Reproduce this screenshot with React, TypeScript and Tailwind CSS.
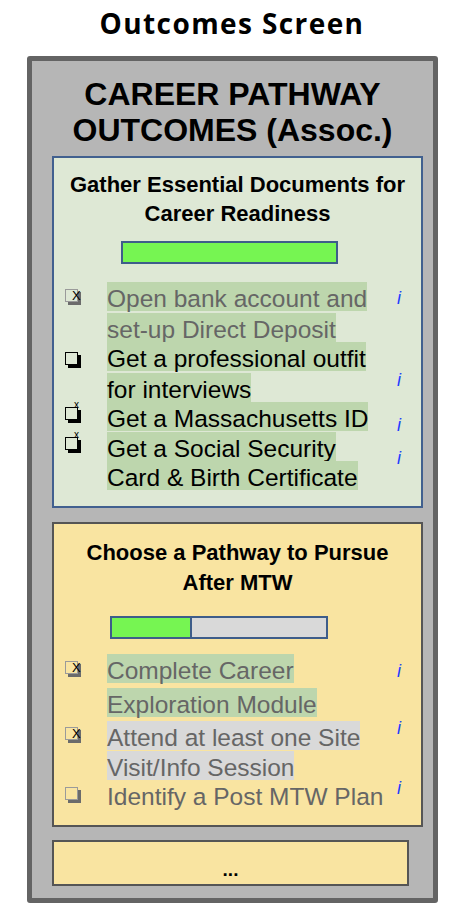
import React from "react";

type Tone = "dark" | "muted";
type Mark = "none" | "big" | "small";

interface OutcomeItem {
  lines: string[];
  tone: Tone;
  mark: Mark;
  highlight: string;
  lineGap: string;
  spaceTop: string;
  boxTop: string;
  infoTop: string;
}

const documentItems: OutcomeItem[] = [
  {
    lines: ["Open bank account and", "set-up Direct Deposit"],
    tone: "muted",
    mark: "big",
    highlight: "bg-[#bdd6ad]",
    lineGap: "gap-[2px]",
    spaceTop: "mt-0",
    boxTop: "mt-[7px]",
    infoTop: "pt-[7px]",
  },
  {
    lines: ["Get a professional outfit", "for interviews"],
    tone: "dark",
    mark: "none",
    highlight: "bg-[#bdd6ad]",
    lineGap: "gap-[2px]",
    spaceTop: "mt-[0px]",
    boxTop: "mt-[10px]",
    infoTop: "pt-[29px]",
  },
  {
    lines: ["Get a Massachusetts ID"],
    tone: "dark",
    mark: "small",
    highlight: "bg-[#bdd6ad]",
    lineGap: "gap-[2px]",
    spaceTop: "mt-[0px]",
    boxTop: "mt-[5px]",
    infoTop: "pt-[14px]",
  },
  {
    lines: ["Get a Social Security", "Card & Birth Certificate"],
    tone: "dark",
    mark: "small",
    highlight: "bg-[#bdd6ad]",
    lineGap: "gap-[0px]",
    spaceTop: "mt-[1px]",
    boxTop: "mt-[5px]",
    infoTop: "pt-[17px]",
  },
];

const pathwayItems: OutcomeItem[] = [
  {
    lines: ["Complete Career", "Exploration Module"],
    tone: "muted",
    mark: "big",
    highlight: "bg-[#bdd6ad]",
    lineGap: "gap-[5px]",
    spaceTop: "mt-0",
    boxTop: "mt-[7px]",
    infoTop: "pt-[8px]",
  },
  {
    lines: ["Attend at least one Site", "Visit/Info Session"],
    tone: "muted",
    mark: "big",
    highlight: "bg-[#d9d9d9]",
    lineGap: "gap-[1px]",
    spaceTop: "mt-[4px]",
    boxTop: "mt-[6px]",
    infoTop: "-mt-[2px]",
  },
  {
    lines: ["Identify a Post MTW Plan"],
    tone: "muted",
    mark: "none",
    highlight: "",
    lineGap: "gap-0",
    spaceTop: "mt-0",
    boxTop: "mt-[7px]",
    infoTop: "-mt-[1px]",
  },
];

function Checkbox({ tone, mark, fill }: { tone: Tone; mark: Mark; fill: string }) {
  const shade = tone === "dark" ? "bg-black" : "bg-[#6b6b6b]";
  const edge = tone === "dark" ? "border-black" : "border-[#9a9a9a]";

  return (
    <span className="relative block h-[16px] w-[16px]">
      <span className={`absolute left-[3px] top-[3px] h-[13px] w-[13px] ${shade}`} />
      <span className={`absolute left-0 top-0 h-[13px] w-[13px] border ${edge} ${fill}`} />
      {mark === "big" ? (
        <span className="absolute left-[7px] top-[0px] text-[13px] leading-none text-black">X</span>
      ) : null}
      {mark === "small" ? (
        <span className="absolute left-[9px] top-[-7px] text-[10px] leading-none text-black">x</span>
      ) : null}
    </span>
  );
}

function ItemList({ items, fill }: { items: OutcomeItem[]; fill: string }) {
  return (
    <ul className="flex flex-col">
      {items.map((item) => (
        <li key={item.lines[0]} className={`flex ${item.spaceTop}`}>
          <div className={`h-0 w-[53px] pl-[11px] ${item.boxTop}`}>
            <Checkbox tone={item.tone} mark={item.mark} fill={fill} />
          </div>
          <div className={`flex w-[290px] flex-col ${item.lineGap}`}>
            {item.lines.map((line) => (
              <span
                key={line}
                className={`block h-[29px] w-fit whitespace-nowrap text-[24.5px] leading-[33px] ${item.highlight} ${
                  item.tone === "dark" ? "text-black" : "text-[#666666]"
                }`}
              >
                {line}
              </span>
            ))}
          </div>
          <div className={`h-0 ${item.infoTop}`}>
            <span className="block text-[18px] italic leading-[18px] text-[#1d3cff]">i</span>
          </div>
        </li>
      ))}
    </ul>
  );
}

export default function App() {
  return (
    <div className="min-h-[923px] w-[464px] bg-white font-['Liberation_Sans',Arial,sans-serif] text-black">
      <header className="h-[56px] pt-[6px] text-center">
        <h1 className="font-['Open_Sans',sans-serif] text-[28px] font-bold leading-[34px] tracking-[1.4px]">
          Outcomes Screen
        </h1>
      </header>

      <section className="ml-[27px] w-[411px] rounded-[3px] border-[5px] border-[#646464] bg-[#b6b6b6] pb-[12px] pt-[15px]">
        <h2 className="text-center text-[32px] font-bold leading-[36px]">
          CAREER PATHWAY
          <br />
          OUTCOMES (Assoc.)
        </h2>

        <div className="ml-[20px] mt-[8px] w-[371px] border-2 border-[#41608f] bg-[#dee8d5] pb-[16px] pt-[12px]">
          <h3 className="text-center text-[22px] font-bold leading-[29px]">
            Gather Essential Documents for
            <br />
            Career Readiness
          </h3>
          <div className="ml-[67px] mt-[13px] h-[23px] w-[217px] border-2 border-[#3e5d8a] bg-[#76f552]" />
          <div className="mt-[18px]">
            <ItemList items={documentItems} fill="bg-[#dee8d5]" />
          </div>
        </div>

        <div className="ml-[20px] mt-[14px] w-[371px] border-2 border-[#555555] bg-[#f9e4a1] pb-[16px] pt-[14px]">
          <h3 className="text-center text-[22px] font-bold leading-[30px]">
            Choose a Pathway to Pursue
            <br />
            After MTW
          </h3>
          <div className="ml-[56px] mt-[18px] flex h-[23px] w-[218px] border-2 border-[#3e5d8a] bg-[#d9d9d9]">
            <div className="h-full w-[80px] border-r-2 border-[#3e5d8a] bg-[#76f552]" />
          </div>
          <div className="mt-[15px]">
            <ItemList items={pathwayItems} fill="bg-[#f9e4a1]" />
          </div>
        </div>

        <div className="ml-[20px] mt-[13px] flex h-[46px] w-[357px] items-end justify-center border-2 border-[#555555] bg-[#f9e4a1] pb-[3px]">
          <span className="text-[19px] font-bold leading-[22px]">...</span>
        </div>
      </section>
    </div>
  );
}
